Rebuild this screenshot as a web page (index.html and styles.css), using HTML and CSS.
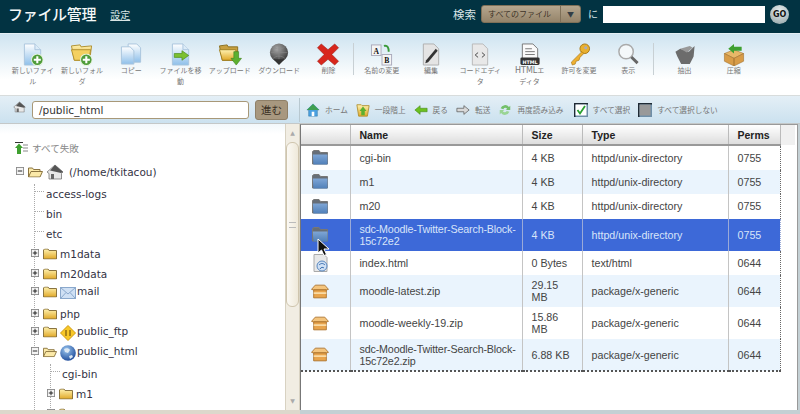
FILE: index.html
```html
<!DOCTYPE html>
<html lang="ja">
<head>
<meta charset="utf-8">
<title>ファイル管理</title>
<link rel="stylesheet" href="styles.css">
</head>
<body>
<svg class="defs" width="0" height="0">
<defs>
<linearGradient id="gFile" x1="0" y1="0" x2="0" y2="1"><stop offset="0" stop-color="#fff"/><stop offset="1" stop-color="#8fc0ea"/></linearGradient>
<linearGradient id="gYel" x1="0" y1="0" x2="0" y2="1"><stop offset="0" stop-color="#fff2b0"/><stop offset="1" stop-color="#e0a828"/></linearGradient>
<linearGradient id="gBlue" x1="0" y1="0" x2="0" y2="1"><stop offset="0" stop-color="#7fa6d6"/><stop offset="1" stop-color="#4f7fb8"/></linearGradient>
<radialGradient id="gGlobe" cx=".4" cy=".3" r=".8"><stop offset="0" stop-color="#9cc8f0"/><stop offset="1" stop-color="#123f92"/></radialGradient>
<radialGradient id="gBall" cx=".4" cy=".3" r=".8"><stop offset="0" stop-color="#a8a8a8"/><stop offset="1" stop-color="#2e2e2e"/></radialGradient>
<symbol id="plus" viewBox="0 0 12 12"><circle cx="6" cy="6" r="5.600" fill="#4f9c3a" stroke="#e8f4e0"/><path d="M6 2.600v6.800M2.600 6h6.800" stroke="#fff" stroke-width="2"/></symbol>
<symbol id="sheet" viewBox="0 0 24 24"><path d="M3 1h11l6 6v16H3z" fill="url(#gFile)" stroke="#a9c4dc"/><path d="M14 1v6h6" fill="#dcecf8" stroke="#a9c4dc"/></symbol>
<symbol id="tfolder" viewBox="0 0 14 11"><path d="M.5 10.500V1.500l1-1h3.500l1 1.500h7.500v8.500z" fill="url(#gYel)" stroke="#8a7440"/></symbol>
<symbol id="ofolder" viewBox="0 0 15 11"><path d="M.5 10.500V1.500h4l1 1.500h6.500v2M.5 10.500L3 5h11.500L12 10.500z" fill="#fbe9a8" stroke="#8a7440"/></symbol>
<symbol id="bfolder" viewBox="0 0 16 15"><path d="M.5 14V1.500L2 .5h5l1.500 2h7v11.500z" fill="#666e78" stroke="#777"/><path d="M.8 4.500h14.700V14a.6.6 0 0 1-.6.6H1.400z" fill="url(#gBlue)"/></symbol>
<symbol id="zipbox" viewBox="0 0 17 14"><path d="M.5 5L4 1h9l3.500 4-2 .5h-12z" fill="#f4c47c" stroke="#a8702a" stroke-width=".8"/><path d="M2.500 5.500h12V13h-12z" fill="#e8a44c" stroke="#a8702a" stroke-width=".8"/><path d="M2.500 8.500h12" stroke="#fff0c8" stroke-width="1.200"/></symbol>
<symbol id="plusbox" viewBox="0 0 9 9"><rect x=".5" y=".5" width="8" height="8" fill="#f4f4f4" stroke="#888"/><path d="M2 4.500h5M4.500 2v5" stroke="#111"/></symbol>
<symbol id="minusbox" viewBox="0 0 9 9"><rect x=".5" y=".5" width="8" height="8" fill="#f4f4f4" stroke="#888"/><path d="M2 4.500h5" stroke="#111"/></symbol>
<symbol id="house" viewBox="0 0 18 16"><path d="M1 8L9 1l8 7-1.500 1.500V15H3V9.500z" fill="#e8e8e8" stroke="#666" stroke-width=".7"/><path d="M4 6.500L9 1l8 7-2 1z" fill="#555"/><rect x="5" y="10" width="3" height="5" fill="#666"/></symbol>
</defs>
</svg>
<div class="app">
  <header class="top">
    <div class="brand"><h1 class="title">ファイル管理</h1><a class="settings" href="#">設定</a></div>
    <div class="search">
      <span class="search-label">検索</span>
      <div class="select"><span class="select-text">すべてのファイル</span><span class="select-arrow">▼</span></div>
      <span class="search-ni">に</span>
      <div class="search-input"></div>
      <div class="go">GO</div>
    </div>
  </header>

  <nav class="toolbar">
    <div class="tool"><svg class="ticon" viewBox="0 0 24 24"><use href="#sheet"/><use href="#plus" x="10" y="11" width="13" height="13"/></svg><span>新しいファイル</span></div>
    <div class="tool"><svg class="ticon" viewBox="0 0 24 24"><path d="M1 3l9-1 1 2 11-1-2 15H4z" fill="url(#gYel)" stroke="#b09030"/><path d="M1 7h20l-2 11H4z" fill="#f4d060" stroke="#b09030"/><use href="#plus" x="10" y="11" width="13" height="13"/></svg><span>新しいフォルダ</span></div>
    <div class="tool"><svg class="ticon" viewBox="0 0 24 24"><path d="M9 1h9l4 4v15H9z" fill="url(#gFile)" stroke="#a9c4dc"/><path d="M2 4h9l4 4v14H2z" fill="url(#gFile)" stroke="#a9c4dc"/></svg><span>コピー</span></div>
    <div class="tool"><svg class="ticon" viewBox="0 0 24 24"><use href="#sheet"/><path d="M5 11h8V8l7 5-7 5v-3H5z" fill="#7cc030" stroke="#4a8a18" stroke-width=".7"/></svg><span>ファイルを移動</span></div>
    <div class="tool"><svg class="ticon" viewBox="0 0 24 24"><path d="M1 3l8-1 1 2h10v14H4z" fill="#c8a040" stroke="#8a7020"/><path d="M1 7h17l1 11H4z" fill="url(#gYel)" stroke="#a08020"/><path d="M16 9h5v7h3l-5.500 7L13 16h3z" fill="#5cb030" stroke="#3c8018" stroke-width=".6"/></svg><span>アップロード</span></div>
    <div class="tool"><svg class="ticon" viewBox="0 0 24 24"><circle cx="12" cy="10" r="9.500" fill="url(#gBall)"/><path d="M3 10h18M12 1v18M6 4c3 3 9 3 12 0M6 16c3-3 9-3 12 0" stroke="#8a8a8a" stroke-width=".6" fill="none"/><path d="M6 17h12l-6 6z" fill="#333"/></svg><span>ダウンロード</span></div>
    <div class="tool"><svg class="ticon" viewBox="0 0 24 24"><path d="M5 1l7 6 7-6 4 4-7 7 7 7-4 4-7-6-7 6-4-4 7-7-7-7z" fill="#d8261c" stroke="#9a2018" stroke-width=".6"/></svg><span>削除</span></div>
    <div class="tool-sep"></div>
    <div class="tool"><svg class="ticon" viewBox="0 0 24 24"><rect x="1" y="2" width="10" height="11" fill="#f4f4f4" stroke="#aab"/><text x="6" y="11" class="glyph">A</text><rect x="12" y="12" width="10" height="11" fill="#f4f4f4" stroke="#aab"/><text x="17" y="21" class="glyph">B</text><path d="M14 3c4-1 5 2 5 6" stroke="#3a9a3a" stroke-width="2" fill="none"/></svg><span>名前の変更</span></div>
    <div class="tool"><svg class="ticon" viewBox="0 0 24 24"><path d="M4 1h11l5 5v17H4z" fill="#e4e4e4" stroke="#b0b0b0"/><path d="M7 18L17 6l2 2L9 20l-3 1z" fill="#333"/></svg><span>編集</span></div>
    <div class="tool"><svg class="ticon" viewBox="0 0 24 24"><path d="M4 1h11l5 5v17H4z" fill="#e8e8e8" stroke="#b8b8b8"/><path d="M10 10l-3 2.500 3 2.500M14 10l3 2.500-3 2.500" stroke="#444" fill="none"/></svg><span>コードエディタ</span></div>
    <div class="tool"><svg class="ticon" viewBox="0 0 24 24"><path d="M4 1h11l5 5v12H4z" fill="#fafafa" stroke="#777"/><path d="M7 6h7M7 9h10M7 12h10" stroke="#777"/><rect x="2" y="15" width="20" height="8" rx="1.500" fill="#333"/><text x="12" y="21.500" class="badge">HTML</text></svg><span><b class="latin">HTML</b>エ<br>ディタ</span></div>
    <div class="tool"><svg class="ticon" viewBox="0 0 24 24"><circle cx="18" cy="6" r="5" fill="#e8b030" stroke="#a87818"/><circle cx="19" cy="5" r="1.600" fill="#aab"/><path d="M15 9L4 20l1 3 3-1 1-3 3-1 1-3 4-4z" fill="#eeb030" stroke="#a87818" stroke-width=".7"/></svg><span>許可を変更</span></div>
    <div class="tool"><svg class="ticon" viewBox="0 0 24 24"><circle cx="10" cy="9" r="7.500" fill="#f4f8fa" stroke="#aaa" stroke-width="1.500"/><path d="M15.500 14.500L22 21" stroke="#666" stroke-width="3"/></svg><span>表示</span></div>
    <div class="tool-sep tool-sep-b"></div>
    <div class="tool"><svg class="ticon" viewBox="0 0 24 24"><path d="M2 9l5-3 9 3 6-6-1 11-4 8H8L4 14z" fill="#6c6c6c"/><path d="M7 6l10-3 3 2-6 5z" fill="#999"/></svg><span>抽出</span></div>
    <div class="tool"><svg class="ticon" viewBox="0 0 24 24"><path d="M2 11l10-4 10 4-10 5z" fill="#e8b868" stroke="#a07030" stroke-width=".6"/><path d="M2 11v8l10 5V16zM22 11v8l-10 5V16z" fill="#d89c48" stroke="#a07030" stroke-width=".6"/><path d="M20 4h-8V1L6 6l6 5V8h8z" fill="#3fa030"/></svg><span>圧縮</span></div>
  </nav>

  <div class="addr">
    <svg class="addr-home" viewBox="0 0 18 16"><use href="#house"/></svg>
    <div class="path">/public_html</div>
    <div class="gobtn">進む</div>
    <div class="addr-sep"></div>
    <div class="acts">
      <div class="act"><svg class="aicon" viewBox="0 0 16 16"><path d="M1 8l7-7 7 7-2 0v7H3V8z" fill="#4aa0e0" stroke="#2a70a0" stroke-width=".5"/><path d="M1 8l7-7 7 7z" fill="#3fa050"/><rect x="6.500" y="10" width="3" height="5" fill="#fff"/></svg><span>ホーム</span></div>
      <div class="act"><svg class="aicon" viewBox="0 0 16 16"><path d="M1 2h5l1 1h8l-2 12H3z" fill="url(#gYel)" stroke="#b09030"/><path d="M8 4l4 5H10v5H6V9H4z" fill="#5cb030"/></svg><span>一段階上</span></div>
      <div class="act"><svg class="aicon" viewBox="0 0 16 16"><path d="M1 8l6-5v3h8v4H7v3z" fill="#6cc020" stroke="#3c8010" stroke-width=".6"/></svg><span>戻る</span></div>
      <div class="act"><svg class="aicon" viewBox="0 0 16 16"><path d="M15 8L9 3v3H1v4h8v3z" fill="#d8d8d8" stroke="#555" stroke-width=".8"/></svg><span>転送</span></div>
      <div class="act"><svg class="aicon" viewBox="0 0 16 16"><path d="M3 6a5.500 5.500 0 0 1 9.500-1.500L14 3v5H9l1.500-1.500A3 3 0 0 0 6 7z" fill="#74c06a"/><path d="M13 10a5.500 5.500 0 0 1-9.500 1.500L2 13V8h5L5.500 9.500A3 3 0 0 0 10 9z" fill="#9ad494"/></svg><span>再度読み込み</span></div>
      <div class="act act-all"><svg class="aicon" viewBox="0 0 14 14"><rect width="14" height="14" fill="#6f8fa8"/><path d="M0 0h14v1.500H1.500V14H0z" fill="#1f2a34"/><rect x="1.500" y="1.500" width="11" height="11" fill="#fff"/><path d="M3.500 7l2.500 3.500L11 3" stroke="#2aa030" stroke-width="1.800" fill="none"/></svg><span>すべて選択</span></div>
      <div class="act act-none"><svg class="aicon" viewBox="0 0 14 14"><rect width="14" height="14" fill="#6f8fa8"/><path d="M0 0h14v1.500H1.500V14H0z" fill="#1f2a34"/><rect x="1.500" y="1.500" width="11" height="11" fill="#999"/></svg><span>すべて選択しない</span></div>
    </div>
  </div>

  <main class="panes">
    <aside class="tree-pane">
      <div class="tree">
        <div class="collapse"><svg class="collapse-icon" viewBox="0 0 14 12"><path d="M1 .5h8" stroke="#333"/><path d="M5 1.500L9 6H7v6H3V6H1z" fill="#3fa030"/><path d="M9 3h5M9 6h5M9 9h5" stroke="#888"/></svg><span>すべて失敗</span></div>
        <div class="node n-root"><svg class="box" viewBox="0 0 9 9"><use href="#minusbox"/></svg><svg class="fold" viewBox="0 0 15 11"><use href="#ofolder"/></svg><svg class="home-lg" viewBox="0 0 18 16"><use href="#house"/></svg><span>(/home/tkitacou)</span></div>
        <div class="guide">
          <div class="node leaf">access-logs</div>
          <div class="node leaf">bin</div>
          <div class="node leaf">etc</div>
          <div class="node"><svg class="box" viewBox="0 0 9 9"><use href="#plusbox"/></svg><svg class="fold" viewBox="0 0 14 11"><use href="#tfolder"/></svg><span>m1data</span></div>
          <div class="node"><svg class="box" viewBox="0 0 9 9"><use href="#plusbox"/></svg><svg class="fold" viewBox="0 0 14 11"><use href="#tfolder"/></svg><span>m20data</span></div>
          <div class="node n-special"><svg class="box" viewBox="0 0 9 9"><use href="#plusbox"/></svg><svg class="fold" viewBox="0 0 14 11"><use href="#tfolder"/></svg><svg class="sp" viewBox="0 0 16 16"><rect x=".5" y="2.500" width="15" height="11" fill="#cfe0f4" stroke="#8aa8cc"/><path d="M.5 2.500L8 9l7.500-6.500M.5 13.500L6 7.500M15.500 13.500L10 7.500" stroke="#8aa8cc" fill="none"/></svg><span class="sp-label">mail</span></div>
          <div class="node n-php"><svg class="box" viewBox="0 0 9 9"><use href="#plusbox"/></svg><svg class="fold" viewBox="0 0 14 11"><use href="#tfolder"/></svg><span>php</span></div>
          <div class="node n-ftp"><svg class="box" viewBox="0 0 9 9"><use href="#plusbox"/></svg><svg class="fold" viewBox="0 0 14 11"><use href="#tfolder"/></svg><svg class="sp" viewBox="0 0 16 16"><path d="M8 .5L15.500 8 8 15.500.5 8z" fill="#f8c828" stroke="#d09a10"/><path d="M6 5v6M10 5v6" stroke="#7a5a10" stroke-width="1.200"/></svg><span class="sp-label">public_ftp</span></div>
          <div class="node n-html"><svg class="box" viewBox="0 0 9 9"><use href="#minusbox"/></svg><svg class="fold" viewBox="0 0 15 11"><use href="#ofolder"/></svg><svg class="sp" viewBox="0 0 16 16"><circle cx="8" cy="8" r="7.800" fill="url(#gGlobe)"/><path d="M4 4c2-1 5-1 6 1l-2 3-3-1zM9 11l3-1 1 2-3 2z" fill="#dce8f4"/></svg><span class="sp-label">public_html</span></div>
          <div class="sub">
            <div class="node leaf">cgi-bin</div>
            <div class="node"><svg class="box" viewBox="0 0 9 9"><use href="#plusbox"/></svg><svg class="fold" viewBox="0 0 14 11"><use href="#tfolder"/></svg><span>m1</span></div>
            <div class="node"><svg class="box" viewBox="0 0 9 9"><use href="#plusbox"/></svg><svg class="fold" viewBox="0 0 14 11"><use href="#tfolder"/></svg><span>m20</span></div>
          </div>
        </div>
      </div>
      <div class="vbar">
        <div class="vbar-arrow">▲</div>
        <div class="vbar-thumb"><div class="grip"></div></div>
        <div class="vbar-space"></div>
        <div class="vbar-arrow">▼</div>
      </div>
    </aside>

    <section class="files">
      <div class="files-top">
        <table class="grid">
          <thead>
            <tr><th class="c-icon"></th><th class="c-name">Name</th><th class="c-size">Size</th><th class="c-type">Type</th><th class="c-perm">Perms</th></tr>
          </thead>
          <tbody>
            <tr><td class="ic"><svg class="ficon" viewBox="0 0 16 15"><use href="#bfolder"/></svg></td><td>cgi-bin</td><td>4 KB</td><td>httpd/unix-directory</td><td>0755</td></tr>
            <tr class="alt"><td class="ic"><svg class="ficon" viewBox="0 0 16 15"><use href="#bfolder"/></svg></td><td>m1</td><td>4 KB</td><td>httpd/unix-directory</td><td>0755</td></tr>
            <tr><td class="ic"><svg class="ficon" viewBox="0 0 16 15"><use href="#bfolder"/></svg></td><td>m20</td><td>4 KB</td><td>httpd/unix-directory</td><td>0755</td></tr>
            <tr class="sel"><td class="ic"><svg class="ficon" viewBox="0 0 16 15"><use href="#bfolder"/></svg></td><td class="long">sdc-Moodle-Twitter-Search-Block-<wbr>15c72e2</td><td>4 KB</td><td>httpd/unix-directory</td><td>0755</td></tr>
            <tr><td class="ic"><svg class="ficon ficon-doc" viewBox="0 0 16 18"><path d="M2 .5h10l3 3v14H2z" fill="#e8e8e8" stroke="#aaa"/><circle cx="10" cy="12" r="5" fill="#cfe0f4" stroke="#5a88c0"/><path d="M7 11c2-2 4-2 6 0M8 15c1-2 3-2 4-1" stroke="#3a70b0" fill="none"/></svg></td><td>index.html</td><td>0 Bytes</td><td>text/html</td><td>0644</td></tr>
            <tr class="alt tall"><td class="ic"><svg class="ficon ficon-zip" viewBox="0 0 17 14"><use href="#zipbox"/></svg></td><td>moodle-latest.zip</td><td>29.15 MB</td><td>package/x-generic</td><td>0644</td></tr>
            <tr class="tall"><td class="ic"><svg class="ficon ficon-zip" viewBox="0 0 17 14"><use href="#zipbox"/></svg></td><td>moodle-weekly-19.zip</td><td>15.86 MB</td><td>package/x-generic</td><td>0644</td></tr>
            <tr class="alt tall last"><td class="ic"><svg class="ficon ficon-zip" viewBox="0 0 17 14"><use href="#zipbox"/></svg></td><td class="long">sdc-Moodle-Twitter-Search-Block-<wbr>15c72e2.zip</td><td>6.88 KB</td><td>package/x-generic</td><td>0644</td></tr>
          </tbody>
        </table>
        <div class="head-fill"></div>
      </div>
      <svg class="cursor" viewBox="0 0 13 19"><path d="M1 1v14l3.500-3 2.500 5.500 2.500-1L7 11h5z" fill="#111" stroke="#fff"/></svg>
    </section>
  </main>
</div>
</body>
</html>
```
FILE: styles.css
```css
* { box-sizing: border-box; }
html, body { margin: 0; padding: 0; }
body { width: 800px; height: 414px; overflow: hidden; background: #fff; font-family: "DejaVu Sans", "Noto Sans CJK JP", sans-serif; }
.defs { position: absolute; }
.app { width: 800px; height: 414px; display: flex; flex-direction: column; overflow: hidden; }

/* header */
.top { height: 33px; flex: none; background: #023342; display: flex; justify-content: space-between; align-items: center; padding: 0 11px 5px 8px; }
.brand { display: flex; align-items: center; gap: 14px; }
.title { margin: 0; font: 500 15px/20px "Noto Sans CJK JP", sans-serif; color: #f4f8f8; letter-spacing: -.3px; }
.settings { color: #d8e4e4; font: 10px/14px "Noto Sans CJK JP", sans-serif; text-decoration: underline; padding-top: 2px; }
.search { display: flex; align-items: center; }
.search-label { color: #d8e4e6; font: 11.500px/14px "Noto Sans CJK JP", sans-serif; margin-right: 5px; }
.select { width: 100px; height: 18px; border-radius: 3px; background: linear-gradient(#b5a68e, #95846a); border: 1px solid #7f7058; display: flex; align-items: center; color: #3e3428; font: 8px/12px "Noto Sans CJK JP", sans-serif; }
.select-text { flex: 1; padding-left: 6px; }
.select-arrow { width: 20px; text-align: center; border-left: 1px solid #7f7058; line-height: 16px; color: #333d44; font-size: 7px; }
.search-ni { color: #d8e4e6; font: 10px/14px "Noto Sans CJK JP", sans-serif; margin: 0 5px 0 7px; }
.search-input { width: 162px; height: 17px; background: #fff; }
.go { width: 19px; height: 19px; border-radius: 50%; margin-left: 5px; background: radial-gradient(circle at 50% 30%, #e8eeee, #8fa0a4); color: #111; font: bold 8px/19px "DejaVu Sans", sans-serif; text-align: center; letter-spacing: -.3px; }

/* toolbar */
.toolbar { height: 63px; flex: none; background: linear-gradient(#cfe4f1, #f6fafc 60%, #fff 75%); border-top: 1px solid #e4eef4; border-bottom: 1px solid #d8dcdc; display: flex; align-items: flex-start; padding: 9px 0 0 8px; }
.tool { width: 49.300px; display: flex; flex-direction: column; align-items: center; text-align: center; color: #777; font: 7px/10.500px "Noto Sans CJK JP", sans-serif; padding: 0 3px; }
.tool span { display: block; margin-top: -1px; }
.latin { font: 8px/1 "DejaVu Sans", sans-serif; }
.ticon { width: 24px; height: 23px; display: block; }
.glyph { font: bold 8px "Liberation Serif", serif; text-anchor: middle; fill: #111; }
.badge { font: bold 5px "DejaVu Sans", sans-serif; text-anchor: middle; fill: #fff; }
.tool-sep { width: 1px; height: 32px; background: #c8d0d4; margin: 0 3px 0 0; }
.tool-sep-b { margin: 0 6px 0 0; }

/* address bar */
.addr { height: 28px; flex: none; background: linear-gradient(#e4eff6, #cbe1ef); border-bottom: 1px solid #c4c8c8; display: flex; align-items: center; padding: 0 0 0 13px; }
.addr-home { width: 13px; height: 12px; margin: -6px 6px 0 0; flex: none; }
.path { width: 217px; height: 18px; background: #fff; border: 1px solid #a89878; border-radius: 3px; color: #333; font: 10.500px/16px "DejaVu Sans", sans-serif; padding-left: 6px; }
.gobtn { width: 33px; height: 20px; margin-left: 6px; background: #a8987f; border: 1px solid #8f8068; border-radius: 3px; color: #3a3024; font: 10.500px/18px "Noto Sans CJK JP", sans-serif; text-align: center; }
.addr-sep { width: 1px; height: 24px; margin-left: 11px; background: #b8c8d0; }
.acts { display: flex; align-items: center; margin-left: 6px; color: #777; font: 7.700px/12px "Noto Sans CJK JP", sans-serif; }
.act { display: flex; align-items: center; gap: 5px; white-space: nowrap; }
.act + .act { margin-left: 8px; }
.aicon { width: 14px; height: 14px; flex: none; }
.act + .act-all { margin-left: 10px; }

/* panes */
.panes { flex: 1; min-height: 0; display: flex; background: #c4d0d4; padding-bottom: 4px; }
.tree-pane { width: 300px; flex: none; display: flex; background: #fff; box-shadow: 0 4px 0 #dcd8cc; }
.tree { flex: 1; min-width: 0; overflow: hidden; padding: 14px 0 0 14px; font: 10.500px/20px "DejaVu Sans", sans-serif; color: #334; background: linear-gradient(#f2f8fb, #fff 10px); }
.collapse { display: flex; align-items: center; gap: 4px; color: #888; font: 9.600px/20px "Noto Sans CJK JP", sans-serif; margin-bottom: 4px; }
.collapse-icon { width: 14px; height: 12px; flex: none; }
.node { display: flex; align-items: center; height: 20px; white-space: nowrap; }
.n-root { margin-left: 2px; margin-bottom: 2px; }
.box { width: 8px; height: 8px; flex: none; margin-right: 4px; margin-top: -2px; }
.fold { width: 14px; height: 12px; flex: none; margin-right: 3px; }
.n-root .fold { width: 15px; }
.home-lg { width: 18px; height: 16px; flex: none; margin-right: 5px; }
.guide { margin-left: 20px; border-left: 1px dotted #aaa; }
.guide > .node { margin-left: -4px; }
.guide > .leaf { margin-left: 0; }
.leaf::before { content: ""; flex: none; width: 9px; margin-right: 2px; margin-top: -5px; border-top: 1px dotted #aaa; }
.n-special { height: 16px; margin-bottom: 4px; }
.n-php { height: 20px; margin-bottom: -3px; }
.n-ftp { height: 20px; }
.n-html { height: 20px; margin-bottom: 3px; }
.sp { width: 16px; height: 16px; flex: none; margin-top: 2px; margin-right: 1px; }
.sp-label { margin-top: -3px; }
.n-ftp, .n-html { position: relative; top: 1px; }
.sub { margin-left: 15px; border-left: 1px dotted #aaa; }
.sub > .node { margin-left: -4px; }
.sub > .leaf { margin-left: 0; }

.vbar { width: 15px; flex: none; background: #f1ede3; border-left: 1px solid #d8d2c2; border-right: 1px solid #d8d2c2; display: flex; flex-direction: column; align-items: stretch; color: #aaa; }
.vbar-arrow { height: 18px; font: 6px/18px "DejaVu Sans", sans-serif; text-align: center; }
.vbar-thumb { height: 165px; flex: none; border: 1px solid #cfc5ae; border-radius: 6px; background: linear-gradient(90deg, #fbf9f4, #efe9da); display: flex; align-items: center; justify-content: center; }
.grip { width: 7px; height: 6px; border-top: 1px solid #bbb; border-bottom: 1px solid #bbb; }
.vbar-space { flex: 1; }

/* files */
.files { flex: 1; min-width: 0; position: relative; background: #fff; border-left: 1px solid #777; border-top: 1px solid #999; margin-right: 2px; border-right: 1px solid #999; }
.files-top { display: flex; align-items: flex-start; }
.grid { width: 479px; flex: none; border-collapse: collapse; table-layout: fixed; font: 10.700px/12px "Liberation Sans", sans-serif; color: #444; }
.grid th { height: 20px; font-size: 10.500px; font-weight: bold; text-align: left; color: #222; background: linear-gradient(#fff, #ddd); border-right: 1px solid #bbb; border-bottom: 2px solid #999; padding: 0 9px; }
.c-icon { width: 49px; }
.c-name { width: 172px; }
.c-size { width: 60px; }
.c-type { width: 146px; }
.c-perm { width: 52px; }
.grid td { padding: 0 0 0 9px; border-right: 1px solid #c4c4c4; height: 24.500px; vertical-align: middle; }
.grid td:nth-child(3) { padding-right: 9px; }
.grid td:last-child { border-right: 1px dotted #666; }
.grid .ic { padding: 0 0 0 11px; }
.grid .long { letter-spacing: -.15px; }
.grid tr.alt td { background: #eaf4fd; }
.grid tr.tall td { height: 32px; }
.grid tr.sel td { background: #3d69d8; color: #d8e4f8; height: 32px; border-right-color: #9aaad8; }
.grid tr.last td { border-bottom: 2px dotted #555; }
.ficon { display: block; width: 16px; height: 15px; }
.ficon-doc { width: 16px; height: 18px; }
.ficon-zip { width: 18px; height: 15px; margin-left: -1px; }
.head-fill { flex: 1; height: 20px; margin-right: 2px; background: #f0f0f0; }
.cursor { position: absolute; left: 16px; top: 113px; width: 13px; height: 19px; }
```
